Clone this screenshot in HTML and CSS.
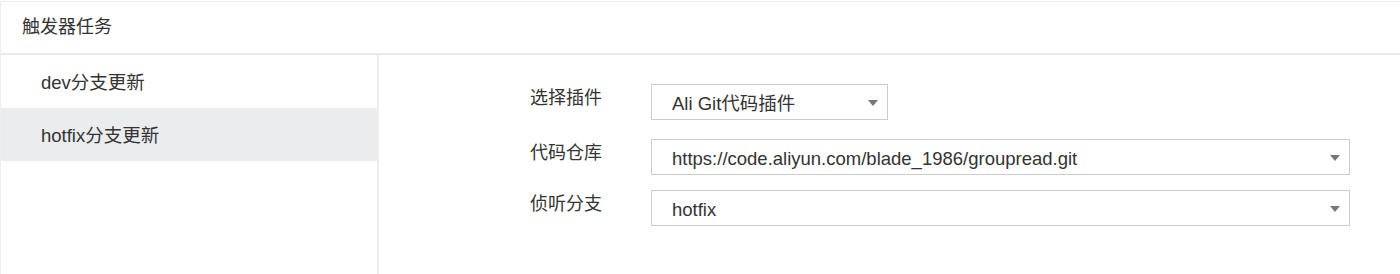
FILE: index.html
```html
<!DOCTYPE html>
<html lang="zh-CN">
<head>
  <meta charset="UTF-8">
  <title>触发器任务</title>
  <link rel="stylesheet" href="styles.css">
</head>
<body>
  <div class="panel">
    <div class="panel-head">触发器任务</div>
    <div class="panel-body">
      <ul class="side">
        <li>dev分支更新</li>
        <li class="active">hotfix分支更新</li>
      </ul>
      <div class="form">
        <div class="row first">
          <label>选择插件</label>
          <div class="select short">Ali Git代码插件<span class="caret"></span></div>
        </div>
        <div class="row">
          <label>代码仓库</label>
          <div class="select">https://code.aliyun.com/blade_1986/groupread.git<span class="caret"></span></div>
        </div>
        <div class="row">
          <label>侦听分支</label>
          <div class="select">hotfix<span class="caret"></span></div>
        </div>
      </div>
    </div>
  </div>
</body>
</html>
```

FILE: styles.css
```css
body { margin: 0; font-family: "Liberation Sans", "Noto Sans CJK SC", sans-serif; color: #333; background: #fff; overflow: hidden; }
.panel { border: 1px solid #eee; border-right: none; border-bottom: none; height: 273px; box-sizing: border-box; margin-top: 1px; overflow: hidden; }
.panel-head { height: 53px; line-height: 51px; padding-left: 21px; font-size: 18px; border-bottom: 2px solid #eaeaea; box-sizing: border-box; }
.panel-body { display: flex; height: 219px; }
.side { list-style: none; margin: 0; padding: 0; width: 376px; border-right: 2px solid #eeeeee; }
.side li { height: 53px; line-height: 55px; padding-left: 40px; font-size: 18.5px; }
.side li.active { background: #ebecee; }
.form { padding: 29px 0 0 151px; flex: 1; }
.row { display: flex; align-items: flex-start; margin-bottom: 15px; }
.row.first { margin-bottom: 19px; }
.row label { width: 121px; font-size: 18px; line-height: 28px; }
.select { position: relative; width: 699px; height: 36px; line-height: 37px; border: 1px solid #ccc; box-sizing: border-box; padding-left: 20px; font-size: 18.5px; }
.select.short { width: 237px; }
.caret { position: absolute; right: 9px; top: 15px; width: 0; height: 0; border-left: 5px solid transparent; border-right: 5px solid transparent; border-top: 6px solid #777; }
```
